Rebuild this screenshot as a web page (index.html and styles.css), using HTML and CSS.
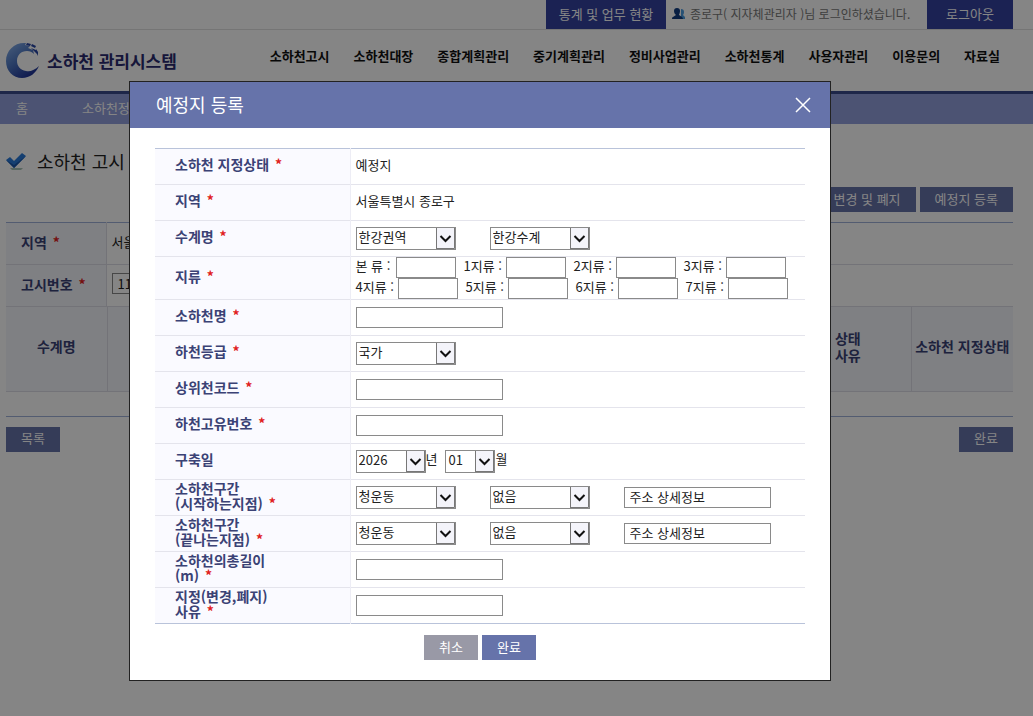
FILE: index.html
```
<!DOCTYPE html>
<html lang="ko">
<head>
<meta charset="utf-8">
<title>소하천 관리시스템</title>
<link rel="stylesheet" href="styles.css">
</head>
<body>
<div class="page">
  <div class="topbar">
    <a class="tab stats" href="#">통계 및 업무 현황</a>
    <span class="user">
      <svg width="14" height="12" viewBox="0 0 14 12" aria-hidden="true"><path fill="#4a9be0" d="M9 1c2 0 3 1 3 3s-1 3-1 3l2 2v2H9z"/><path fill="#103c80" d="M5 0c2 0 3 1 3 3 0 2-1 3-1 4l3 2c1 1 1 2 1 2H0s0-2 1-2l3-2C3 6 2 5 2 3s1-3 3-3z"/></svg>
      종로구( 지자체관리자 )님 로그인하셨습니다.
    </span>
    <a class="tab logout" href="#">로그아웃</a>
  </div>
  <header class="header">
    <a class="brand" href="#">
      <svg width="35" height="37" viewBox="0 0 35 37" aria-hidden="true">
        <defs><linearGradient id="wave" x1="0" y1="0" x2="0.7" y2="1"><stop offset="0" stop-color="#8db6ee"/><stop offset="0.5" stop-color="#4e78c4"/><stop offset="1" stop-color="#1c2f94"/></linearGradient></defs>
        <path fill="url(#wave)" d="M20 1C9 0 0 8 0 19c0 10 7 17 16 17 8 0 14-5 17-12-4 4-9 6-13 5-6-1-9-5-9-10 0-6 4-10 10-10 3 0 5 1 7 3l-1-4-5-2 2-2-5-1z"/>
        <path fill="#2745a5" d="M21 1l4 1-1 2-4-1zM26 2l4 2-1 2-4-2zM25 6l5 2 1 4-3-3zM30 7l2 3v4l-2-4z"/>
      </svg>
      <span>소하천 관리시스템</span>
    </a>
    <nav class="menu">
      <a href="#">소하천고시</a><a href="#">소하천대장</a><a href="#">종합계획관리</a><a href="#">중기계획관리</a><a href="#">정비사업관리</a><a href="#">소하천통계</a><a href="#">사용자관리</a><a href="#">이용문의</a><a href="#">자료실</a>
    </nav>
  </header>
  <div class="crumbs"><a href="#">홈</a><a href="#">소하천정보</a></div>
  <main class="content">
    <h1 class="title">
      <svg width="21" height="20" viewBox="0 0 21 20" aria-hidden="true"><path fill="#a9c3b8" d="M4 17h13l-2 2H6z"/><path fill="#2a7ad8" d="M0 9l4-3 4 4 8-8 4 3L8 17z"/><path fill="#1b55a8" d="M0 9l8 5L20 5 8 17z"/></svg>
      소하천 고시
    </h1>
    <div class="actions">
      <button class="btn" type="button">지정 변경 및 폐지</button>
      <button class="btn" type="button">예정지 등록</button>
    </div>
    <table class="info">
      <tr><th>지역 <i>*</i></th><td>서울특별시</td></tr>
      <tr><th><label for="notice">고시번호</label> <i>*</i></th><td><input id="notice" class="notice" value="11"></td></tr>
    </table>
    <table class="list">
      <tr><th class="c1">수계명</th><th></th><th class="c3">지정 상태<br>변경 사유</th><th class="c4">소하천 지정상태</th></tr>
    </table>
    <div class="foot">
      <button class="btn" type="button">목록</button>
      <button class="btn" type="button">완료</button>
    </div>
  </main>
</div>
<div class="overlay">
  <section class="modal" role="dialog" aria-labelledby="dlg">
    <header class="modal-head">
      <h2 id="dlg">예정지 등록</h2>
      <button class="close" type="button" aria-label="닫기"><svg width="16" height="16" viewBox="0 0 16 16"><path d="M1 1l14 14M15 1L1 15" stroke="#fff" stroke-width="1.5"/></svg></button>
    </header>
    <form class="modal-body">
      <table class="form">
        <tr><th>소하천 지정상태 <i>*</i></th><td>예정지</td></tr>
        <tr><th>지역 <i>*</i></th><td>서울특별시 종로구</td></tr>
        <tr><th><label for="basin">수계명</label> <i>*</i></th><td><div class="row"><select id="basin"><option>한강권역</option></select><select aria-label="수계"><option>한강수계</option></select></div></td></tr>
        <tr><th>지류 <i>*</i></th><td>
          <div class="line"><label>본 류 : <input></label><label>1지류 : <input></label><label>2지류 : <input></label><label>3지류 : <input></label></div>
          <div class="line second"><label>4지류 : <input></label><label>5지류 : <input></label><label>6지류 : <input></label><label>7지류 : <input></label></div>
        </td></tr>
        <tr><th><label for="name">소하천명</label> <i>*</i></th><td><input id="name"></td></tr>
        <tr><th><label for="grade">하천등급</label> <i>*</i></th><td><div class="row"><select id="grade"><option>국가</option></select></div></td></tr>
        <tr><th><label for="upper">상위천코드</label> <i>*</i></th><td><input id="upper"></td></tr>
        <tr><th><label for="rid">하천고유번호</label> <i>*</i></th><td><input id="rid"></td></tr>
        <tr><th>구축일</th><td><div class="row date"><label><select class="year"><option>2026</option></select>년</label><label><select class="month"><option>01</option></select>월</label></div></td></tr>
        <tr><th><label for="start">소하천구간<br>(시작하는지점)</label> <i>*</i></th><td><div class="row"><select id="start"><option>청운동</option></select><select aria-label="시작 리"><option>없음</option></select><input aria-label="시작 주소" value="주소 상세정보"></div></td></tr>
        <tr><th><label for="end">소하천구간<br>(끝나는지점)</label> <i>*</i></th><td><div class="row"><select id="end"><option>청운동</option></select><select aria-label="끝 리"><option>없음</option></select><input aria-label="끝 주소" value="주소 상세정보"></div></td></tr>
        <tr><th><label for="len">소하천의총길이<br>(m)</label> <i>*</i></th><td><input id="len"></td></tr>
        <tr><th><label for="why">지정(변경,폐지)<br>사유</label> <i>*</i></th><td><input id="why"></td></tr>
      </table>
      <div class="buttons">
        <button class="btn cancel" type="button">취소</button>
        <button class="btn" type="button">완료</button>
      </div>
    </form>
  </section>
</div>
</body>
</html>
```
FILE: styles.css
```
* { box-sizing: border-box; }
body { margin: 0; background: #fff; color: #222; font: 13px/18px "Noto Sans CJK KR", sans-serif; }
button, input, select { font: inherit; color: inherit; margin: 0; border-radius: 0; }
a { color: inherit; text-decoration: none; }
table { width: 100%; border-collapse: collapse; }
th { text-align: left; color: #3b4275; font-weight: 700; font-size: 14px; }
th i { color: #e02020; font-style: normal; margin-left: 2px; }

.topbar { display: flex; justify-content: flex-end; height: 30px; padding-right: 20px; border-bottom: 1px solid #e0e0e0; }
.tab { display: flex; align-items: center; justify-content: center; height: 29px; padding-bottom: 2px; background: #3542a0; color: #fff; }
.stats { width: 120px; }
.logout { width: 86px; }
.user { display: flex; align-items: center; gap: 4px; width: 261px; padding: 0 0 2px 6px; color: #777; font-size: 12px; white-space: nowrap; }

.header { display: flex; align-items: center; justify-content: space-between; height: 61px; padding: 0 33px 0 6px; }
.brand { display: flex; align-items: center; gap: 6px; color: #2b2b70; font-size: 17px; font-weight: 700; }
.menu { display: flex; gap: 24px; padding-bottom: 10px; color: #111; font-weight: 700; white-space: nowrap; }

.crumbs { display: flex; gap: 54px; align-items: center; height: 33px; padding: 0 0 2px 16px; border-top: 3px solid #3b4c8c; background: #929fdc; color: #fff; }

.content { padding: 24px 20px 0 6px; }
.title { display: flex; align-items: center; gap: 10px; margin: 0; font-size: 18px; line-height: 26px; font-weight: 400; }
.actions { display: flex; justify-content: flex-end; gap: 4px; margin: 13px 0 10px; }
.btn { height: 25px; padding: 0 15px 2px; border: 0; background: #6673aa; color: #fff; line-height: 22px; white-space: nowrap; }
.info { border-top: 1px solid #9fb0d8; }
.info tr { height: 42px; border-bottom: 1px solid #dcdce6; }
.info th { width: 100px; padding: 0 0 4px 15px; background: #f3f5fc; border-right: 1px solid #dcdce6; }
.info td { padding: 0 5px 4px; }
.notice { display: block; width: 147px; height: 21px; padding: 0 5px; border: 1px solid #888; background: #fff; }
.list th { height: 84px; padding: 0 0 4px; text-align: center; line-height: 17px; background: #f3f5fc; border-right: 1px solid #dcdce6; border-bottom: 1px solid #dcdce6; }
.list .c1 { width: 101px; }
.list .c3 { width: 156px; }
.list .c4 { width: 102px; border-right: 0; white-space: nowrap; }
.foot { display: flex; justify-content: space-between; margin-top: 24px; padding-top: 10px; border-top: 1px solid #9fb0d8; }

.overlay { position: fixed; inset: 0; padding: 81px 73px 0 0; background: rgba(0, 0, 0, 0.48); }
.modal { width: 702px; max-width: 100%; margin: 0 auto; background: #fff; border: 1px solid #222; }
.modal-head { display: flex; align-items: center; justify-content: space-between; height: 46px; padding: 0 19px 0 26px; background: #6673aa; color: #fff; }
.modal-head h2 { margin: 0; padding-bottom: 2px; font-size: 18px; line-height: 26px; font-weight: 400; }
.close { display: flex; padding: 0; border: 0; background: none; }
.modal-body { padding: 20px 25px; }
.form { border-top: 1px solid #b9c3da; border-bottom: 1px solid #b9c3da; }
.form tr { height: 36px; border-bottom: 1px solid #e4e4ec; }
.form th { width: 195px; padding: 0 0 4px 20px; line-height: 15px; background: #fafaff; border-right: 1px solid #ededf5; }
.form td { padding: 0 5px; }
.form tr:nth-child(-n+2) td { padding-bottom: 4px; }
.form input { display: block; width: 147px; height: 21px; padding: 0 5px 2px; border: 1px solid #8a8a8a; background: #fff; }
.form tr:last-child { border-bottom-color: #b9c3da; }
.row { display: flex; align-items: center; gap: 34px; }
.row select { appearance: none; width: 100px; height: 23px; padding: 0 2px 4px; border: 1px solid #8a8a8a;
  background: #fff url("data:image/svg+xml,%3Csvg xmlns='http://www.w3.org/2000/svg' width='19' height='21'%3E%3Cpath fill='%23f4f4fa' d='M0 0h19v21H0z'/%3E%3Cpath fill='none' stroke='%23777' d='M.5 0v21M18.5 0v20.5H0'/%3E%3Cpath d='M4.5 8l5 5 5-5' fill='none' stroke='%23111' stroke-width='2'/%3E%3C/svg%3E") right center no-repeat; }
.row .year { width: 70px; }
.row .month { width: 50px; }
.date { gap: 8px; }
.date label { display: flex; }
.line { display: flex; gap: 8px; }
.line label { display: flex; justify-content: space-between; width: 102px; line-height: 17px; white-space: nowrap; }
.line label:first-child { width: 100px; }
.second label:first-child { width: 102px; }
.form .line input { width: 60px; }
.buttons { display: flex; justify-content: center; gap: 4px; margin-top: 11px; }
.btn.cancel { background: #9999a6; }
```
